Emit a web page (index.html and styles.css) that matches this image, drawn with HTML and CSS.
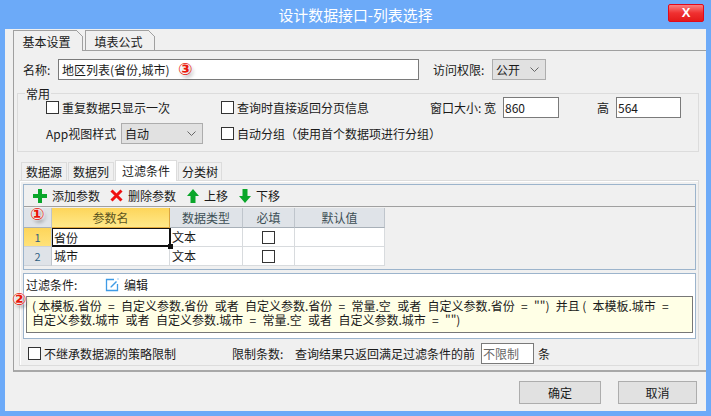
FILE: index.html
```html
<!DOCTYPE html>
<html lang="zh">
<head>
<meta charset="utf-8">
<title>设计数据接口-列表选择</title>
<link rel="stylesheet" href="styles.css">
</head>
<body>
<div class="window">
  <header class="titlebar">
    <span class="title">设计数据接口-列表选择</span>
    <span class="close">X</span>
  </header>
  <main class="client">
    <div class="outer-tabs">
      <span class="otab otab-on">基本设置</span>
      <span class="otab">填表公式</span>
    </div>
    <section class="outer-panel">
      <div class="name-row">
        <label class="name-label">名称:</label>
        <div class="input name-input">地区列表(省份,城市)<span class="mark mark3">③</span></div>
        <label class="access-label">访问权限:</label>
        <div class="select access-select">公开<svg class="chev" viewBox="0 0 9 5"><path d="M.5.5l4 4 4-4" fill="none" stroke="#666"/></svg></div>
      </div>
      <fieldset class="group">
        <legend>常用</legend>
        <div class="group-row row-a">
          <span class="check-item c1"><i class="check"></i>重复数据只显示一次</span>
          <span class="check-item c2"><i class="check"></i>查询时直接返回分页信息</span>
          <span class="size-label">窗口大小: 宽</span>
          <div class="input size-w">860</div>
          <span class="high-label">高</span>
          <div class="input size-h">564</div>
        </div>
        <div class="group-row row-b">
          <span class="app-label">App视图样式</span>
          <div class="select app-select">自动<svg class="chev" viewBox="0 0 9 5"><path d="M.5.5l4 4 4-4" fill="none" stroke="#666"/></svg></div>
          <span class="check-item"><i class="check"></i>自动分组（使用首个数据项进行分组）</span>
        </div>
      </fieldset>
      <div class="inner-tabs">
        <span class="itab w47">数据源</span>
        <span class="itab w47">数据列</span>
        <span class="itab itab-on">过滤条件</span>
        <span class="itab w44">分类树</span>
      </div>
      <section class="inner-panel">
        <div class="param-box">
          <div class="toolbar">
            <span class="tool t1"><svg width="14" height="14" viewBox="0 0 14 14"><path d="M5 0h4v5h5v4H9v5H5V9H0V5h5z" fill="#0aa62a"/></svg>添加参数</span>
            <span class="tool t2"><svg width="13" height="13" viewBox="0 0 13 13"><path d="M1.500 1.500l10 10M11.500 1.500l-10 10" stroke="#f01010" stroke-width="3"/></svg>删除参数</span>
            <span class="tool t3"><svg width="12" height="14" viewBox="0 0 12 14"><path d="M6 0l6 7H8.500v7h-5V7H0z" fill="#0aa62a"/></svg>上移</span>
            <span class="tool t4"><svg width="12" height="14" viewBox="0 0 12 14"><path d="M6 14L0 7h3.500V0h5v7H12z" fill="#0aa62a"/></svg>下移</span>
          </div>
          <div class="grid">
            <div class="h corner"></div>
            <div class="h h-on">参数名</div>
            <div class="h">数据类型</div>
            <div class="h">必填</div>
            <div class="h">默认值</div>
            <div class="rh rh-on">1</div>
            <div class="cell cell-on">省份<i class="handle"></i></div>
            <div class="cell">文本</div>
            <div class="cell center"><i class="check"></i></div>
            <div class="cell"></div>
            <div class="rh">2</div>
            <div class="cell">城市</div>
            <div class="cell">文本</div>
            <div class="cell center"><i class="check"></i></div>
            <div class="cell"></div>
          </div>
          <span class="mark mark1">①</span>
        </div>
        <div class="filter-box">
          <div class="filter-head">
            <span class="filter-label">过滤条件:</span>
            <svg width="14" height="14" viewBox="0 0 14 14"><path d="M9 1.500H1.500v11h11V6" fill="none" stroke="#3f9be6" stroke-width="1.300"/><path d="M5.500 8.500L11 3l1 1-5.500 5.500H5.500z" fill="#3f9be6"/><path d="M12.500 .5h1v1h-1z" fill="#3f9be6"/></svg>
            <span class="edit">编辑</span>
          </div>
          <div class="expr">(&thinsp;本模板.省份&nbsp;=&nbsp;自定义参数.省份&nbsp;或者&nbsp;自定义参数.省份&nbsp;=&nbsp;常量.空&nbsp;或者&nbsp;自定义参数.省份&nbsp;=&nbsp;"")&nbsp;并且&thinsp;(&nbsp;本模板.城市&nbsp;=<br>自定义参数.城市&nbsp;或者&nbsp;自定义参数.城市&nbsp;=&nbsp;常量.空&nbsp;或者&nbsp;自定义参数.城市&nbsp;=&nbsp;"")</div>
          <span class="mark mark2">②</span>
        </div>
        <div class="limit-row">
          <span class="check-item l1"><i class="check"></i>不继承数据源的策略限制</span>
          <span class="l2">限制条数:</span>
          <span class="l3">查询结果只返回满足过滤条件的前</span>
          <div class="input limit-input">不限制</div>
          <span>条</span>
        </div>
      </section>
    </section>
    <footer class="actions">
      <button class="btn ok">确定</button>
      <button class="btn">取消</button>
    </footer>
  </main>
</div>
</body>
</html>
```
FILE: styles.css
```css
* { box-sizing: border-box; }
html, body { margin: 0; padding: 0; }
body { width: 711px; height: 416px; overflow: hidden; font: 12px/16px "Noto Sans CJK SC", "Liberation Sans", sans-serif; color: #1a1a1a; }
.window { width: 711px; height: 416px; background: #6caaf8; display: flex; flex-direction: column; padding: 0 5px 5px; }
.titlebar { height: 29px; flex: none; display: flex; align-items: center; justify-content: center; position: relative; color: #fff; }
.title { font-size: 14.900px; line-height: 29px; }
.close { position: absolute; right: 2px; top: 4px; width: 36px; height: 18px; background: linear-gradient(#f98080, #f03030 50%, #e41a1a); border: 1px solid #e00a1c; border-radius: 2px; color: #fff; font: bold 13px/16px "Liberation Sans", sans-serif; text-align: center; }
.client { flex: 1; background: #f0f0f0; display: flex; flex-direction: column; padding: 1px 0 0 8px; min-height: 0; }
.outer-tabs { display: flex; height: 20px; flex: none; gap: 2px; }
.otab { position: relative; width: 70px; height: 20px; text-align: center; line-height: 21px; background: #f0f0f0; border: 1px solid #a0a0a0; border-bottom: 0; font-size: 12px; padding-right: 3px; }
.otab-on { height: 21px; z-index: 2; }
.otab::after { content: ""; position: absolute; right: -1px; top: -1px; width: 7px; height: 7px; background: linear-gradient(to top right, transparent 44%, #a0a0a0 44%, #a0a0a0 56%, #f0f0f0 56%); }
.outer-panel { height: 322px; flex: none; border: 1px solid #a0a0a0; border-right: 0; border-bottom: 2px solid #a8a8a8; padding: 8px 7px 0 3px; position: relative; }
.name-row { display: flex; align-items: center; height: 21px; }
.name-label { width: 35px; padding-left: 6px; margin-right: 6px; white-space: nowrap; }
.input { background: #fff; border: 1px solid #7a7a7a; height: 21px; line-height: 19px; padding-left: 1px; position: relative; white-space: nowrap; }
.name-input { width: 361px; padding-left: 3px; }
.access-label { margin-left: 14px; width: 59px; white-space: nowrap; }
.select { background: #e1e1e1; border: 1px solid #adadad; height: 21px; line-height: 19px; padding-left: 3px; position: relative; }
.access-select { width: 54px; }
.chev { position: absolute; right: 6px; top: 7px; width: 9px; height: 5px; }
.group { border: 1px solid #dcdcdc; margin: 7px 0 0; padding: 0; width: 682px; height: 65px; min-width: 0; }
.group legend { padding: 0 1px; margin-left: 7px; line-height: 13px; font-size: 12px; height: 13px; }
.group-row { display: flex; align-items: center; position: relative; }
.row-a { height: 21px; margin-top: -3px; padding-left: 28px; }
.row-b { height: 21px; margin-top: 5px; padding-left: 28px; }
.check-item { display: inline-flex; align-items: center; white-space: nowrap; }
.check { display: inline-block; width: 13px; height: 13px; background: #fff; border: 1px solid #333; margin-right: 3px; flex: none; }
.c1 { width: 175px; }
.c2 { width: 209px; }
.size-label { width: 73px; white-space: nowrap; }
.size-w { width: 56px; height: 21px; }
.high-label { margin-left: 38px; width: 19px; }
.size-h { width: 65px; height: 21px; }
.app-label { width: 75px; white-space: nowrap; }
.app-select { width: 82px; margin-right: 18px; }
.inner-tabs { display: flex; align-items: flex-end; height: 21px; margin: 7px 0 0 4px; gap: 1px; position: relative; z-index: 1; }
.itab { height: 18px; text-align: center; line-height: 18px; background: #f0f0f0; border: 1px solid #dcdcdc; border-bottom: 0; }
.w47 { width: 46px; }
.w44 { width: 44px; }
.itab-on { width: 62px; height: 21px; background: #fff; line-height: 19px; margin-bottom: -1px; padding-bottom: 1px; }
.inner-panel { width: 680px; height: 186px; border: 1px solid #dcdcdc; box-shadow: inset 1px 1px 0 #fff; margin-left: 2px; padding: 3px 3px 0; }
.param-box { position: relative; width: 673px; height: 86px; border: 1px solid #9cb4cc; background: #f0f0f0; }
.toolbar { display: flex; align-items: center; height: 22px; border-bottom: 1px solid #a0a0a0; padding-left: 9px; }
.tool { display: inline-flex; align-items: center; white-space: nowrap; }
.tool svg { flex: none; margin-right: 5px; }
.t1 { width: 77px; }
.t2 { width: 77px; }
.t3 { width: 52px; }
.grid { display: grid; grid-template-columns: 28px 118px 73px 52px 90px; grid-template-rows: 20px 19px 19px; width: 361px; margin-top: 1px; }
.h { background: #dfe3e8; border-right: 1px solid #bfc5cc; border-bottom: 1px solid #a8b0b8; text-align: center; line-height: 19px; color: #3d4f55; }
.h-on { background: linear-gradient(#fdd55a, #ffe98a); border-bottom-color: #e2a93c; border-right-color: #d9a441; color: #5b5320; }
.corner { background: #dfe3e8; }
.rh { background: #dfe3e8; border-right: 1px solid #bfc5cc; border-bottom: 1px solid #cdd2d8; text-align: center; line-height: 18px; color: #2f5f80; font-size: 11px; }
.rh-on { background: linear-gradient(#fdd55a, #ffe27a); }
.cell { background: #fff; border-right: 1px solid #d8dbde; border-bottom: 1px solid #d8dbde; line-height: 18px; padding-left: 2px; position: relative; }
.cell-on { border: 1px solid #111; border-width: 1px 2px 2px 1px; margin-right: -1px; z-index: 1; line-height: 17px; padding-left: 1px; }
.handle { position: absolute; right: -4px; bottom: -4px; width: 5px; height: 5px; background: #111; }
.center { display: flex; align-items: center; justify-content: center; padding: 0; }
.center .check { margin: 0; }
.mark { position: absolute; color: #e8180c; font: bold 17px/17px "DejaVu Sans", sans-serif; text-shadow: 0 0 2px #fff, 0 0 2px #fff, 2px 3px 3px rgba(0,0,0,.35); }
.mark1 { left: 6px; top: 21px; }
.mark2 { left: -12px; top: 17px; }
.mark3 { left: 119px; top: 1px; }
.filter-box { position: relative; width: 673px; height: 66px; border: 1px solid #9cb4cc; background: #fff; margin-top: 3px; padding: 0 2px; }
.filter-head { display: flex; align-items: center; height: 22px; }
.filter-head svg { flex: none; }
.filter-label { width: 79px; white-space: nowrap; }
.edit { margin-left: 5px; }
.expr { height: 37px; border: 1px solid #777; background: #ffffe6; padding: 2px 0 0 5px; line-height: 13.500px; white-space: nowrap; word-spacing: 3.600px; }
.limit-row { display: flex; align-items: center; height: 21px; margin-top: 4px; white-space: nowrap; padding-left: 5px; }
.l1 { width: 204px; }
.l2 { width: 63px; }
.l3 { width: 186px; }
.limit-input { width: 53px; color: #666; margin-right: 4px; }
.actions { display: flex; justify-content: flex-end; gap: 17px; padding: 9px 9px 0 0; }
.btn { width: 82px; height: 23px; background: #e1e1e1; border: 1px solid #adadad; font: 12px/16px "Noto Sans CJK SC", sans-serif; color: #1a1a1a; padding: 0; }
.btn:last-child { width: 79px; }
```
